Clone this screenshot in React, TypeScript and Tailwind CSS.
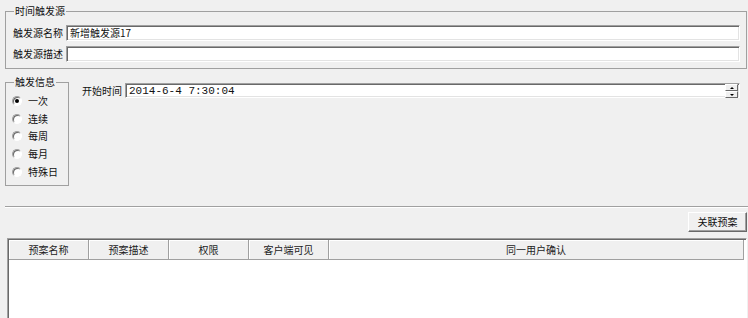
import React from 'react'

const sunken =
  'border border-t-[#a0a0a0] border-l-[#a0a0a0] border-r-white border-b-white shadow-[inset_1px_1px_0_#696969,inset_-1px_-1px_0_#e3e3e3]'

function TextBox({ value, className = '' }: { value?: string; className?: string }) {
  return (
    <div className={`flex items-center h-[16px] bg-white pl-[3px] ${sunken} ${className}`}>
      <span className="leading-[12px] whitespace-nowrap">{value}</span>
    </div>
  )
}

function Radio({ label, checked }: { label: string; checked?: boolean }) {
  return (
    <div className="flex items-center h-[17.75px] gap-[6px]">
      <span className="relative flex items-center justify-center w-[10px] h-[10px] rounded-full bg-white border border-t-[#a0a0a0] border-l-[#a0a0a0] border-r-white border-b-white shadow-[inset_1px_1px_0_#696969]">
        {checked && <span className="w-[4px] h-[4px] rounded-full bg-black" />}
      </span>
      <span>{label}</span>
    </div>
  )
}

function SpinHalf({ up }: { up?: boolean }) {
  return (
    <div className="flex items-center justify-center h-[7px] w-[13px] bg-[#f0f0f0] border-t border-l border-white border-r border-b border-r-[#696969] border-b-[#696969]">
      <svg width="4" height="2" viewBox="0 0 4 2">
        {up ? <path d="M0 2h4L2 0z" fill="#000" /> : <path d="M0 0h4L2 2z" fill="#000" />}
      </svg>
    </div>
  )
}

const columns = [
  { name: '预案名称', w: 'w-[80px]' },
  { name: '预案描述', w: 'w-[80px]' },
  { name: '权限', w: 'w-[80px]' },
  { name: '客户端可见', w: 'w-[80px]' },
  { name: '同一用户确认', w: 'w-[415px]' },
]

export default function App() {
  return (
    <div className="w-[748px] h-[318px] overflow-hidden bg-[#f0f0f0] text-[10px] leading-[12px] text-[#111] font-['Noto_Sans_CJK_SC',sans-serif]">
      {/* 时间触发源 */}
      <fieldset className="block ml-[5px] mt-[5px] w-[742px] h-[64px] border border-[#a0a0a0] pt-[8px] pl-[7px] pr-[6px]">
        <legend className="ml-[1px] px-[1px] leading-[12px]">时间触发源</legend>
        <div className="flex items-center h-[16px]">
          <span className="w-[53px] whitespace-nowrap">触发源名称</span>
          <TextBox value="新增触发源17" className="flex-1" />
        </div>
        <div className="flex items-center h-[16px] mt-[5px]">
          <span className="w-[53px] whitespace-nowrap">触发源描述</span>
          <TextBox className="flex-1" />
        </div>
      </fieldset>

      <div className="flex mt-[7px]">
        {/* 触发信息 */}
        <fieldset className="block ml-[5px] w-[64px] h-[110px] border border-[#a0a0a0] pt-[4px] pl-[6px]">
          <legend className="ml-[2px] px-[1px] leading-[12px]">触发信息</legend>
          <Radio label="一次" checked />
          <Radio label="连续" />
          <Radio label="每周" />
          <Radio label="每月" />
          <Radio label="特殊日" />
        </fieldset>

        <div className="flex flex-1 items-center h-[15px] mt-[7px] ml-[13px] pr-[8px]">
          <span className="w-[43px] whitespace-nowrap">开始时间</span>
          <div className={`relative flex flex-1 items-center h-[15px] bg-white pl-[3px] ${sunken}`}>
            <span className="font-['Liberation_Mono',monospace] text-[11px] leading-[12px] whitespace-nowrap">2014-6-4 7:30:04</span>
            <div className="absolute right-[1px] top-[0px] flex flex-col">
              <SpinHalf up />
              <SpinHalf />
            </div>
          </div>
        </div>
      </div>

      {/* separator */}
      <div className="ml-[5px] mt-[20px] h-[2px] border-t border-t-[#a0a0a0] border-b border-b-white" />

      <div className="flex justify-end pr-[1px] mt-[4px]">
        <button className="w-[59px] h-[20px] bg-[#f0f0f0] border border-t-white border-l-white border-r-[#696969] border-b-[#696969] shadow-[inset_-1px_-1px_0_#a0a0a0] leading-[12px]">
          关联预案
        </button>
      </div>

      {/* 预案列表 */}
      <div className="ml-[7px] mt-[6px] w-[740px] h-[100px] bg-white border border-t-[#a0a0a0] border-l-[#a0a0a0] border-r-white border-b-white shadow-[inset_1px_1px_0_#696969]">
        <div className="flex ml-[1px] mt-[1px]">
          {columns.map((c) => (
            <div
              key={c.name}
              className={`${c.w} h-[20px] flex items-center justify-center bg-[#f0f0f0] border-r border-b border-[#a0a0a0] shadow-[inset_1px_1px_0_#fff] text-[#222] whitespace-nowrap`}
            >
              {c.name}
            </div>
          ))}
        </div>
      </div>
    </div>
  )
}
